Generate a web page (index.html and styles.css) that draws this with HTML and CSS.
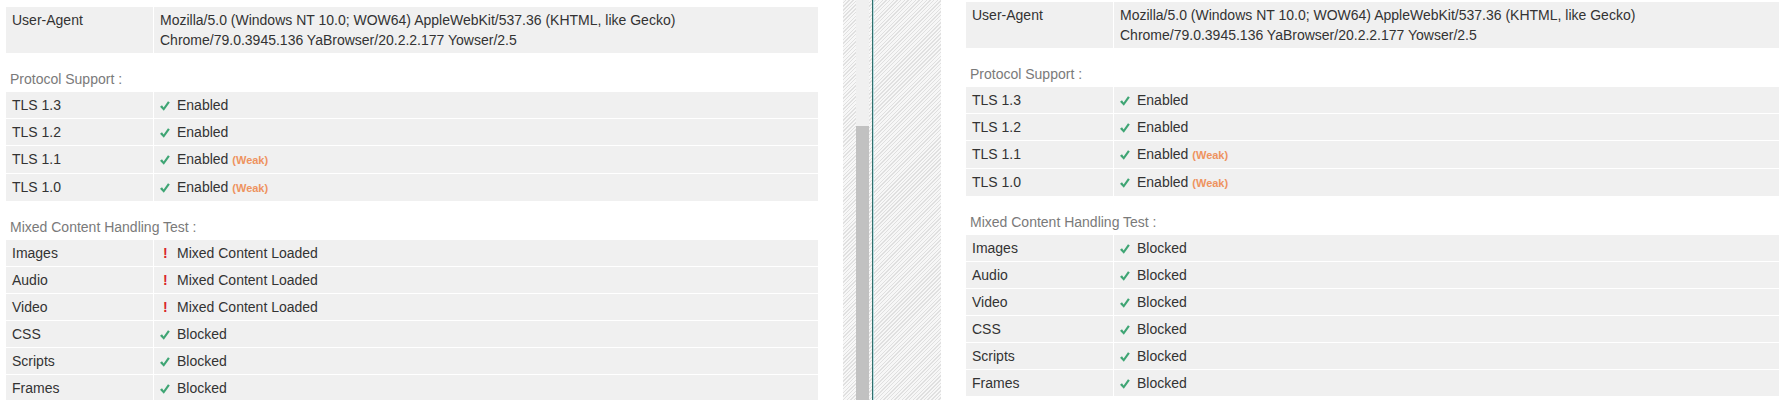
FILE: index.html
```html
<!DOCTYPE html>
<html>
<head>
<meta charset="utf-8">
<link rel="stylesheet" href="styles.css">
</head>
<body>
<div class="page">
  <section class="panel panel-left">
    <div class="tbl">
      <div class="row ua"><div class="k">User-Agent</div><div class="v">Mozilla/5.0 (Windows NT 10.0; WOW64) AppleWebKit/537.36 (KHTML, like Gecko)<br>Chrome/79.0.3945.136 YaBrowser/20.2.2.177 Yowser/2.5</div></div>
    </div>
    <h3 class="head">Protocol Support :</h3>
    <div class="tbl">
      <div class="row"><div class="k">TLS 1.3</div><div class="v"><span class="ok"><svg viewBox="0 0 10 10" width="10" height="10"><path d="M0 5.8 L2 4.3 L3.6 6.4 L8 0.2 L9.8 1.5 L3.8 9.8 Z"/></svg></span>Enabled</div></div>
      <div class="row"><div class="k">TLS 1.2</div><div class="v"><span class="ok"><svg viewBox="0 0 10 10" width="10" height="10"><path d="M0 5.8 L2 4.3 L3.6 6.4 L8 0.2 L9.8 1.5 L3.8 9.8 Z"/></svg></span>Enabled</div></div>
      <div class="row"><div class="k">TLS 1.1</div><div class="v"><span class="ok"><svg viewBox="0 0 10 10" width="10" height="10"><path d="M0 5.8 L2 4.3 L3.6 6.4 L8 0.2 L9.8 1.5 L3.8 9.8 Z"/></svg></span>Enabled <span class="weak">(Weak)</span></div></div>
      <div class="row"><div class="k">TLS 1.0</div><div class="v"><span class="ok"><svg viewBox="0 0 10 10" width="10" height="10"><path d="M0 5.8 L2 4.3 L3.6 6.4 L8 0.2 L9.8 1.5 L3.8 9.8 Z"/></svg></span>Enabled <span class="weak">(Weak)</span></div></div>
    </div>
    <h3 class="head">Mixed Content Handling Test :</h3>
    <div class="tbl">
      <div class="row"><div class="k">Images</div><div class="v"><span class="bad">!</span>Mixed Content Loaded</div></div>
      <div class="row"><div class="k">Audio</div><div class="v"><span class="bad">!</span>Mixed Content Loaded</div></div>
      <div class="row"><div class="k">Video</div><div class="v"><span class="bad">!</span>Mixed Content Loaded</div></div>
      <div class="row"><div class="k">CSS</div><div class="v"><span class="ok"><svg viewBox="0 0 10 10" width="10" height="10"><path d="M0 5.8 L2 4.3 L3.6 6.4 L8 0.2 L9.8 1.5 L3.8 9.8 Z"/></svg></span>Blocked</div></div>
      <div class="row"><div class="k">Scripts</div><div class="v"><span class="ok"><svg viewBox="0 0 10 10" width="10" height="10"><path d="M0 5.8 L2 4.3 L3.6 6.4 L8 0.2 L9.8 1.5 L3.8 9.8 Z"/></svg></span>Blocked</div></div>
      <div class="row"><div class="k">Frames</div><div class="v"><span class="ok"><svg viewBox="0 0 10 10" width="10" height="10"><path d="M0 5.8 L2 4.3 L3.6 6.4 L8 0.2 L9.8 1.5 L3.8 9.8 Z"/></svg></span>Blocked</div></div>
    </div>
  </section>

  <div class="divider">
    <div class="scrollbar"><div class="track"></div><div class="thumb"></div></div>
    <div class="edge"></div>
  </div>

  <section class="panel panel-right">
    <div class="tbl">
      <div class="row ua"><div class="k">User-Agent</div><div class="v">Mozilla/5.0 (Windows NT 10.0; WOW64) AppleWebKit/537.36 (KHTML, like Gecko)<br>Chrome/79.0.3945.136 YaBrowser/20.2.2.177 Yowser/2.5</div></div>
    </div>
    <h3 class="head">Protocol Support :</h3>
    <div class="tbl">
      <div class="row"><div class="k">TLS 1.3</div><div class="v"><span class="ok"><svg viewBox="0 0 10 10" width="10" height="10"><path d="M0 5.8 L2 4.3 L3.6 6.4 L8 0.2 L9.8 1.5 L3.8 9.8 Z"/></svg></span>Enabled</div></div>
      <div class="row"><div class="k">TLS 1.2</div><div class="v"><span class="ok"><svg viewBox="0 0 10 10" width="10" height="10"><path d="M0 5.8 L2 4.3 L3.6 6.4 L8 0.2 L9.8 1.5 L3.8 9.8 Z"/></svg></span>Enabled</div></div>
      <div class="row"><div class="k">TLS 1.1</div><div class="v"><span class="ok"><svg viewBox="0 0 10 10" width="10" height="10"><path d="M0 5.8 L2 4.3 L3.6 6.4 L8 0.2 L9.8 1.5 L3.8 9.8 Z"/></svg></span>Enabled <span class="weak">(Weak)</span></div></div>
      <div class="row"><div class="k">TLS 1.0</div><div class="v"><span class="ok"><svg viewBox="0 0 10 10" width="10" height="10"><path d="M0 5.8 L2 4.3 L3.6 6.4 L8 0.2 L9.8 1.5 L3.8 9.8 Z"/></svg></span>Enabled <span class="weak">(Weak)</span></div></div>
    </div>
    <h3 class="head">Mixed Content Handling Test :</h3>
    <div class="tbl">
      <div class="row"><div class="k">Images</div><div class="v"><span class="ok"><svg viewBox="0 0 10 10" width="10" height="10"><path d="M0 5.8 L2 4.3 L3.6 6.4 L8 0.2 L9.8 1.5 L3.8 9.8 Z"/></svg></span>Blocked</div></div>
      <div class="row"><div class="k">Audio</div><div class="v"><span class="ok"><svg viewBox="0 0 10 10" width="10" height="10"><path d="M0 5.8 L2 4.3 L3.6 6.4 L8 0.2 L9.8 1.5 L3.8 9.8 Z"/></svg></span>Blocked</div></div>
      <div class="row"><div class="k">Video</div><div class="v"><span class="ok"><svg viewBox="0 0 10 10" width="10" height="10"><path d="M0 5.8 L2 4.3 L3.6 6.4 L8 0.2 L9.8 1.5 L3.8 9.8 Z"/></svg></span>Blocked</div></div>
      <div class="row"><div class="k">CSS</div><div class="v"><span class="ok"><svg viewBox="0 0 10 10" width="10" height="10"><path d="M0 5.8 L2 4.3 L3.6 6.4 L8 0.2 L9.8 1.5 L3.8 9.8 Z"/></svg></span>Blocked</div></div>
      <div class="row"><div class="k">Scripts</div><div class="v"><span class="ok"><svg viewBox="0 0 10 10" width="10" height="10"><path d="M0 5.8 L2 4.3 L3.6 6.4 L8 0.2 L9.8 1.5 L3.8 9.8 Z"/></svg></span>Blocked</div></div>
      <div class="row"><div class="k">Frames</div><div class="v"><span class="ok"><svg viewBox="0 0 10 10" width="10" height="10"><path d="M0 5.8 L2 4.3 L3.6 6.4 L8 0.2 L9.8 1.5 L3.8 9.8 Z"/></svg></span>Blocked</div></div>
    </div>
  </section>
</div>
</body>
</html>
```

FILE: styles.css
```css
html, body {
  margin: 0;
  padding: 0;
  background: #fff;
  height: 400px;
  overflow: hidden;
}
body {
  font-family: "Liberation Sans", Arial, sans-serif;
  font-size: 14px;
  color: #333;
}
.page {
  display: flex;
  height: 400px;
}
.panel {
  background: #fff;
  box-sizing: border-box;
}
.panel-left {
  width: 843px;
  padding: 7px 25px 0 6px;
}
.panel-right {
  flex: 1;
  padding: 2px 8px 0 25px;
}
.tbl {
  display: flex;
  flex-direction: column;
  gap: 1px;
}
.row {
  display: grid;
  grid-template-columns: 147px 1fr;
  column-gap: 1px;
}
.k, .v {
  background: #f0f0f0;
  line-height: 20px;
  padding: 3px 6px;
}
.v {
  white-space: nowrap;
}
.head {
  margin: 0;
  padding: 16px 0 3px 4px;
  font-size: 14px;
  font-weight: normal;
  line-height: 20px;
  color: #7a7a7a;
}
.ok {
  display: inline-block;
  width: 17px;
  vertical-align: -1px;
}
.ok svg {
  display: block;
  fill: #3fa574;
}
.bad {
  display: inline-block;
  width: 14px;
  padding-left: 3px;
  color: #d9262b;
  font-weight: bold;
}
.weak {
  color: #ee935f;
  font-weight: bold;
  font-size: 11px;
}
.divider {
  width: 98px;
  display: flex;
  padding-left: 13px;
  box-sizing: border-box;
  background: repeating-linear-gradient(135deg, #f7f7f7 0 1.6px, #e0e0e0 1.6px 2.6px);
}
.scrollbar {
  width: 13px;
  display: flex;
  flex-direction: column;
}
.track {
  height: 126px;
  background: #f0f0f0;
}
.thumb {
  flex: 1;
  background: #c1c1c1;
}
.edge {
  width: 1px;
  margin-left: 3px;
  background: #2f6f6b;
  box-shadow: 1px 0 0 #b9dbe0;
}
```
